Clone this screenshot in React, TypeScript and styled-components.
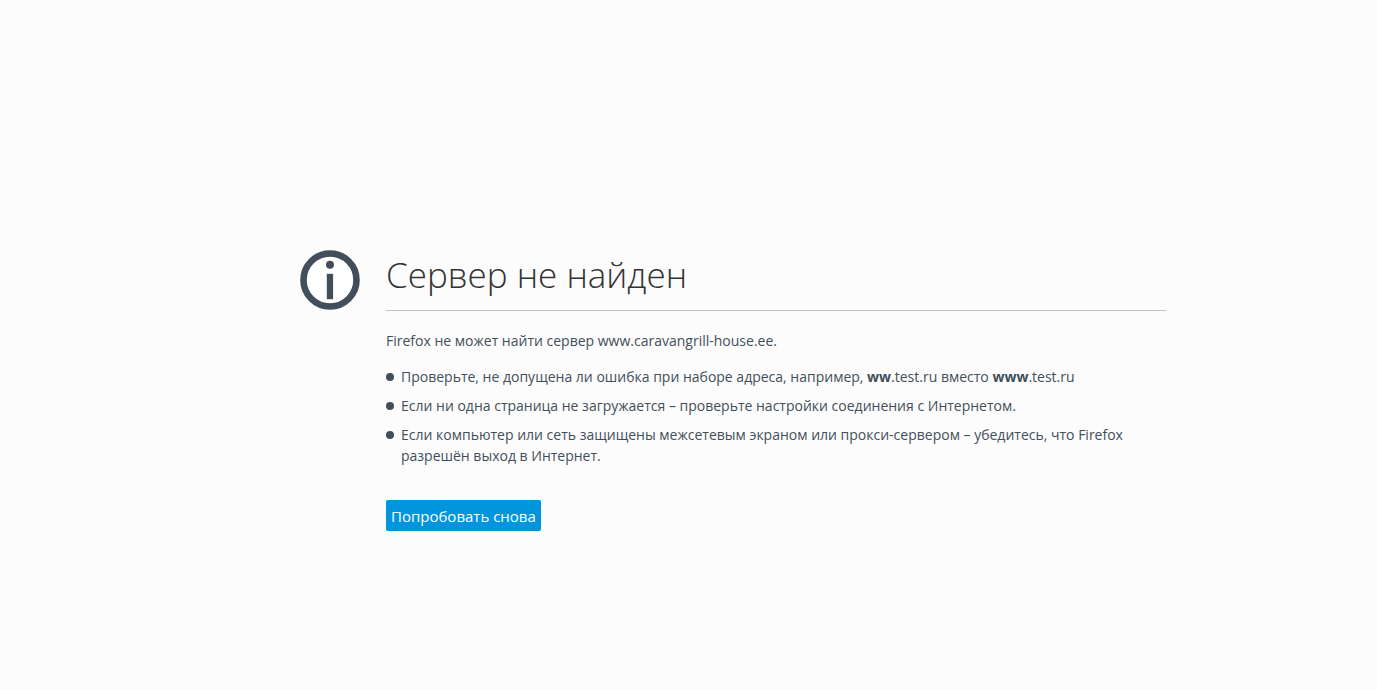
import React from 'react';
import styled, { createGlobalStyle } from 'styled-components';

const GlobalStyle = createGlobalStyle`
  * { box-sizing: border-box; }
  body {
    margin: 0;
    background: #fcfcfc;
    color: #424f5a;
    font-family: "Open Sans", "Noto Sans", sans-serif;
    font-size: 14px;
    line-height: 21px;
  }
`;

const Page = styled.main`
  display: flex;
  justify-content: center;
  min-height: 100vh;
  padding: 250px 24px 48px;
`;

const ErrorPanel = styled.div`
  display: flex;
  align-items: flex-start;
  gap: 26px;
  width: 100%;
  max-width: 955px;
  padding-left: 89px;
`;

const InfoIcon = styled.svg`
  flex: none;
  width: 60px;
  height: 60px;
`;

const Content = styled.div`
  flex: 1;
  min-width: 0;
`;

const Title = styled.h1`
  margin: 0 0 19px;
  padding-bottom: 10px;
  border-bottom: 1px solid #c1c1c1;
  color: #333;
  font-size: 35px;
  font-weight: 300;
  line-height: 50px;
`;

const Description = styled.p`
  margin: 0 0 15px;
`;

const Suggestions = styled.ul`
  display: flex;
  flex-direction: column;
  gap: 8px;
  margin: 0 0 34px;
  padding: 0;
  list-style: none;
`;

const Suggestion = styled.li`
  display: flex;
  gap: 7px;

  &::before {
    content: "";
    flex: none;
    width: 8px;
    height: 8px;
    margin-top: 7px;
    border-radius: 50%;
    background: #424f5a;
  }
`;

const RetryButton = styled.button`
  height: 31px;
  padding: 1px 5px 0;
  border: 0;
  border-radius: 2px;
  background: #0095dd;
  color: #fff;
  font: inherit;
  font-size: 15px;
  cursor: pointer;
`;

export default function App() {
  return (
    <>
      <GlobalStyle />
      <Page>
        <ErrorPanel>
          <InfoIcon viewBox="0 0 60 60" aria-hidden="true">
            <circle cx="30" cy="30" r="26.5" fill="#fff" stroke="#424f5a" strokeWidth="6.6" />
            <circle cx="30" cy="14.7" r="4" fill="#424f5a" />
            <rect x="26.8" y="23.8" width="6.3" height="25.4" fill="#424f5a" />
          </InfoIcon>
          <Content>
            <Title>Сервер не найден</Title>
            <Description>Firefox не может найти сервер www.caravangrill-house.ee.</Description>
            <Suggestions>
              <Suggestion>
                <span>
                  Проверьте, не допущена ли ошибка при наборе адреса, например, <b>ww</b>.test.ru вместо{' '}
                  <b>www</b>.test.ru
                </span>
              </Suggestion>
              <Suggestion>
                <span>Если ни одна страница не загружается – проверьте настройки соединения с Интернетом.</span>
              </Suggestion>
              <Suggestion>
                <span>
                  Если компьютер или сеть защищены межсетевым экраном или прокси-сервером – убедитесь, что Firefox
                  разрешён выход в Интернет.
                </span>
              </Suggestion>
            </Suggestions>
            <RetryButton type="button">Попробовать снова</RetryButton>
          </Content>
        </ErrorPanel>
      </Page>
    </>
  );
}
